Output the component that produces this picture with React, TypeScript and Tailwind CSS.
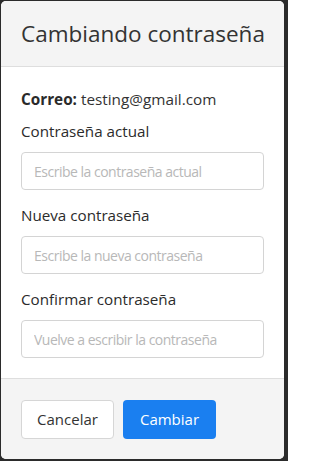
const font = { fontFamily: '"Open Sans", "Noto Sans", sans-serif' };

type FieldProps = {
  label: string;
  placeholder: string;
  first?: boolean;
};

function Field({ label, placeholder, first }: FieldProps) {
  return (
    <div className={first ? "mt-2" : "mt-[13px]"}>
      <label className="block text-[15.2px] font-medium leading-[24px] text-[#2b2b2b]">{label}</label>
      <input
        type="password"
        placeholder={placeholder}
        className="mt-[9px] block h-[38px] w-full rounded-[4px] border border-[#d4d4d4] bg-white px-3 text-[14px] tracking-[-0.5px] text-[#333] outline-none placeholder:text-[#b8b8b8]"
        style={font}
      />
    </div>
  );
}

export default function App() {
  return (
    <div className="h-[461px] w-[288px] bg-[#2b2b2b] pl-px pt-px" style={font}>
      <div className="flex h-[458px] w-[283px] flex-col overflow-hidden rounded-[5px] bg-white">
        <div className="flex h-[66px] shrink-0 items-center border-b border-[#dedede] bg-[#f4f4f4] px-5">
          <h1 className="whitespace-nowrap text-[22.5px] leading-[32px] text-[#333]">Cambiando contraseña</h1>
        </div>
        <div className="shrink-0 px-5 pb-5 pt-5">
          <p className="text-[15.3px] leading-[24px] text-[#333]">
            <span className="font-bold text-[#2a2a2a]">Correo:</span> testing@gmail.com
          </p>
          <Field first label="Contraseña actual" placeholder="Escribe la contraseña actual" />
          <Field label="Nueva contraseña" placeholder="Escribe la nueva contraseña" />
          <Field label="Confirmar contraseña" placeholder="Vuelve a escribir la contraseña" />
        </div>
        <div className="flex flex-1 items-start gap-[9px] border-t border-[#dedede] bg-[#f4f4f4] px-5 pt-[21px]">
          <button className="h-[39px] w-[93px] rounded-[4px] border border-[#d6d6d6] bg-white text-[15px] text-[#333]">
            Cancelar
          </button>
          <button className="h-[39px] w-[93px] rounded-[4px] bg-[#1a7ff0] text-[15px] text-white">
            Cambiar
          </button>
        </div>
      </div>
    </div>
  );
}
